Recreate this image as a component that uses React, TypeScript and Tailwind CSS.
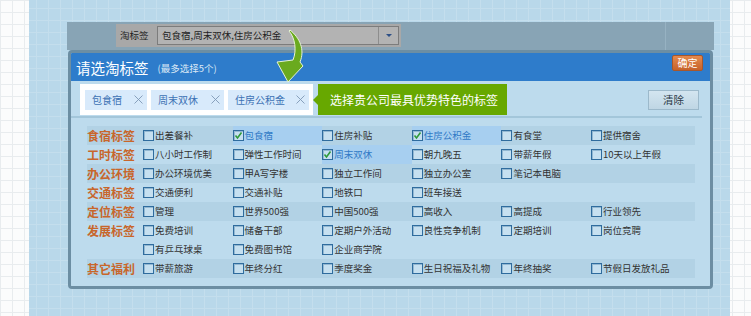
import React from 'react';

type Opt = { t: string; on?: boolean };
type Row = { label: string; band: boolean; items: Opt[] };

const o = (...names: string[]): Opt[] => names.map(n => (n.startsWith('*') ? { t: n.slice(1), on: true } : { t: n }));

const ROWS: Row[] = [
  { label: '食宿标签', band: true, items: o('出差餐补', '*包食宿', '住房补贴', '*住房公积金', '有食堂', '提供宿舍') },
  { label: '工时标签', band: false, items: o('八小时工作制', '弹性工作时间', '*周末双休', '朝九晚五', '带薪年假', '10天以上年假') },
  { label: '办公环境', band: true, items: o('办公环境优美', '甲A写字楼', '独立工作间', '独立办公室', '笔记本电脑') },
  { label: '交通标签', band: false, items: o('交通便利', '交通补贴', '地铁口', '班车接送') },
  { label: '定位标签', band: true, items: o('管理', '世界500强', '中国500强', '高收入', '高提成', '行业领先') },
  { label: '发展标签', band: false, items: o('免费培训', '储备干部', '定期户外活动', '良性竞争机制', '定期培训', '岗位竞聘') },
  { label: '', band: false, items: o('有乒乓球桌', '免费图书馆', '企业商学院') },
  { label: '其它福利', band: true, items: o('带薪旅游', '年终分红', '季度奖金', '生日祝福及礼物', '年终抽奖', '节假日发放礼品') },
];

const SELECTED = [
  { t: '包食宿', w: 'w-[62px]' },
  { t: '周末双休', w: 'w-[73px]' },
  { t: '住房公积金', w: 'w-[81px]' },
];

const Check: React.FC<{ on?: boolean }> = ({ on }) => (
  <span className="w-[11px] h-[11px] shrink-0 border border-[#2f6c9e] bg-[#c6e0f0] shadow-[inset_1px_1px_0_#93b8d2] flex items-center justify-center">
    {on && (
      <svg width="9" height="9" viewBox="0 0 9 9">
        <polyline points="1.5,4.5 3.5,7 7.5,1.5" fill="none" stroke="#2f9a3a" strokeWidth="1.6" />
      </svg>
    )}
  </span>
);

const App: React.FC = () => {
  return (
    <div className="relative flex w-[751px] h-[316px] overflow-hidden [font-family:'Noto_Sans_CJK_SC',sans-serif] bg-[#fbfcfc] bg-[linear-gradient(to_right,#e8ecee_1px,transparent_1px),linear-gradient(to_bottom,#e8ecee_1px,transparent_1px)] [background-size:12px_12px]">
      <div className="w-[29px] shrink-0" />

      {/* blue page */}
      <div className="w-[701px] shrink-0 pt-[22px] pl-[38px] bg-[#b9d8ea] bg-[linear-gradient(to_right,#c4deed_1px,transparent_1px),linear-gradient(to_bottom,#c4deed_1px,transparent_1px)] [background-size:12px_12px] [background-position:7px_8px]">
        {/* dimmed field behind the dialog */}
        <div className="w-[647px] h-[28px] bg-[#88a4b5] flex">
          <div className="ml-[49px] mt-[2px] w-[285px] h-[23px] bg-[#a8a8a8] flex items-center pl-[4px]">
            <span className="text-[9.5px] text-[#222] w-[37px]">淘标签</span>
            <div className="w-[242px] h-[19px] border border-[#7c7c7c] bg-[#b3b3b3] flex items-center">
              <span className="flex-1 pl-[4px] text-[9.5px] text-[#1e1e1e] leading-none">包食宿,周末双休,住房公积金</span>
              <span className="w-[20px] h-full border-l border-[#8d8d8d] flex items-center justify-center">
                <span className="w-0 h-0 border-x-[3px] border-x-transparent border-t-[3px] border-t-[#2d4f86]" />
              </span>
            </div>
          </div>
          <div className="ml-[264px] w-px h-full bg-[#97b2c2]" />
        </div>

        {/* dialog */}
        <div className="ml-[1px] w-[645px] h-[239px] border-[3px] border-[#6c8ea3] rounded-[4px] flex flex-col overflow-hidden">
          <div className="h-[28px] shrink-0 bg-[#2e7ccb] flex items-center pl-[5px]">
            <span className="mt-[3px] text-[14.5px] text-white leading-none">请选淘标签</span>
            <span className="mt-[3px] ml-[9px] text-[9.5px] text-[#dce9f6] leading-none">(最多选择5个)</span>
            <button className="self-start mt-[2px] ml-auto mr-[7px] w-[31px] h-[16px] rounded-[2px] border border-[#a8572b] bg-[linear-gradient(#e48a4e,#c6622b)] text-white text-[10px] leading-none">
              确定
            </button>
          </div>

          <div className="flex-1 bg-[#bddbed] flex flex-col">
            {/* chosen tags */}
            <div className="w-[631px] h-[37px] pt-[3px] pb-px pl-[9px] pr-[3px] border-b-2 border-[#a3c6da] flex items-start">
              <div className="w-[233px] h-[31px] bg-white flex items-center gap-[4px] pl-[5px]">
                {SELECTED.map(s => (
                  <div key={s.t} className={`${s.w} h-[20px] bg-[#d8eafb] flex items-center justify-between pl-[7px] pr-[4px]`}>
                    <span className="text-[10px] text-[#3d72b4] leading-none">{s.t}</span>
                    <svg width="9" height="9" viewBox="0 0 9 9">
                      <path d="M0.5 0.5 L8.5 8.5 M8.5 0.5 L0.5 8.5" stroke="#7f99b5" strokeWidth="0.9" />
                    </svg>
                  </div>
                ))}
              </div>
              <div className="self-center w-0 h-0 border-y-[5px] border-y-transparent border-r-[5px] border-r-[#67a800]" />
              <div className="w-[189px] h-[31px] bg-[#67a800] flex items-center pl-[12px] text-white text-[12px] leading-none">
                选择贵公司最具优势特色的标签
              </div>
              <button className="ml-auto mt-[6px] w-[51px] h-[20px] border border-[#9cb9cb] bg-[linear-gradient(#d3e5f0,#bfd6e4)] text-[10.5px] text-[#2b3947] leading-none">
                清除
              </button>
            </div>

            {/* options */}
            <div className="pt-[8px] pl-[16px] flex flex-col">
              {ROWS.map((r, i) => (
                <div
                  key={i}
                  className={`w-[608px] h-[19px] grid grid-cols-[56px_repeat(6,89.6px)] ${r.band ? 'bg-[#b2d2e5]' : ''}`}
                >
                  <span className="flex items-center text-[12px] font-bold text-[#c8662b] leading-none">{r.label}</span>
                  {r.items.map(it => (
                    <div
                      key={it.t}
                      className={`flex items-center h-full ${it.on ? 'bg-[#a7cff0] text-[#2f79c6]' : 'text-[#333]'}`}
                    >
                      <Check on={it.on} />
                      <span className="ml-px text-[9.5px] leading-none whitespace-nowrap">{it.t}</span>
                    </div>
                  ))}
                </div>
              ))}
            </div>
          </div>
        </div>
      </div>

      <div className="flex-1" />

      {/* green pointer arrow */}
      <svg className="absolute left-[270px] top-[26px]" width="40" height="60" viewBox="0 0 40 60">
        <path
          d="M20 4 C30 12 35 24 30 36 L33 40 L18 56 L7 36 L23 34 C27 24 25 12 19 5 Z"
          fill="#6aaa1e"
          stroke="#e6f2d6"
          strokeWidth="1"
          strokeLinejoin="round"
        />
      </svg>
    </div>
  );
};

export default App;
